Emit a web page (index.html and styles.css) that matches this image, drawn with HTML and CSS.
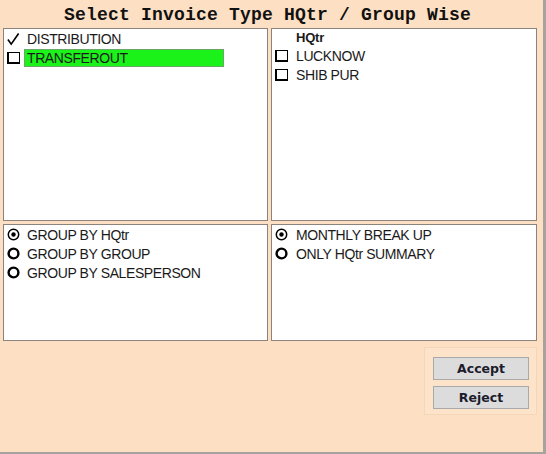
FILE: index.html
```html
<!DOCTYPE html>
<html>
<head>
<meta charset="utf-8">
<link rel="stylesheet" href="styles.css">
</head>
<body>
<div class="window">
  <h1 class="title">Select Invoice Type HQtr / Group Wise</h1>
  <div class="grid">
    <div class="panel">
      <div class="row">
        <svg class="icon" width="14" height="14" viewBox="0 0 14 14"><path d="M1 7.5 L4.5 12.5 L12.5 1" fill="none" stroke="#000" stroke-width="1.8" stroke-linejoin="miter"/></svg>
        <span class="label">DISTRIBUTION</span>
      </div>
      <div class="row">
        <span class="check"></span>
        <span class="label hilite">TRANSFEROUT</span>
      </div>
    </div>
    <div class="panel right">
      <div class="row head"><span class="label bold">HQtr</span></div>
      <div class="row"><span class="check"></span><span class="label">LUCKNOW</span></div>
      <div class="row"><span class="check"></span><span class="label">SHIB PUR</span></div>
    </div>
    <div class="panel">
      <div class="row">
        <svg class="icon radio" width="13" height="13" viewBox="0 0 13 13"><circle cx="6.5" cy="6.5" r="5.2" fill="#fff" stroke="#000" stroke-width="1.5"/><circle cx="6.5" cy="6.5" r="2.2" fill="#000"/></svg>
        <span class="label">GROUP BY HQtr</span>
      </div>
      <div class="row">
        <svg class="icon radio" width="13" height="13" viewBox="0 0 13 13"><circle cx="6.5" cy="6.5" r="4.9" fill="#fff" stroke="#000" stroke-width="2.4"/></svg>
        <span class="label">GROUP BY GROUP</span>
      </div>
      <div class="row">
        <svg class="icon radio" width="13" height="13" viewBox="0 0 13 13"><circle cx="6.5" cy="6.5" r="4.9" fill="#fff" stroke="#000" stroke-width="2.4"/></svg>
        <span class="label">GROUP BY SALESPERSON</span>
      </div>
    </div>
    <div class="panel right">
      <div class="row">
        <svg class="icon radio" width="13" height="13" viewBox="0 0 13 13"><circle cx="6.5" cy="6.5" r="5.2" fill="#fff" stroke="#000" stroke-width="1.5"/><circle cx="6.5" cy="6.5" r="2.2" fill="#000"/></svg>
        <span class="label">MONTHLY BREAK UP</span>
      </div>
      <div class="row">
        <svg class="icon radio" width="13" height="13" viewBox="0 0 13 13"><circle cx="6.5" cy="6.5" r="4.9" fill="#fff" stroke="#000" stroke-width="2.4"/></svg>
        <span class="label">ONLY HQtr SUMMARY</span>
      </div>
    </div>
  </div>
  <div class="actions">
    <div class="btnbox">
      <button class="btn">Accept</button>
      <button class="btn">Reject</button>
    </div>
  </div>
</div>
</body>
</html>
```
FILE: styles.css
```css
html, body {
  margin: 0;
  padding: 0;
}
body {
  width: 546px;
  height: 454px;
  overflow: hidden;
  background: #fde0c3;
}
.window {
  box-sizing: border-box;
  width: 546px;
  height: 454px;
  background: #fde0c3;
  border-right: 3px solid #a6a29e;
  border-bottom: 2px solid #a6a29e;
}
.title {
  margin: 0;
  height: 28px;
  box-sizing: border-box;
  padding: 2px 8px 0 0;
  line-height: 26px;
  text-align: center;
  font-family: "Liberation Mono", "Courier New", monospace;
  font-weight: bold;
  font-size: 18px;
  letter-spacing: 0.2px;
  color: #111;
}
.grid {
  margin-left: 3px;
  display: grid;
  grid-template-columns: 265px 266px;
  grid-template-rows: 193px 117px;
  gap: 3px;
}
.panel {
  box-sizing: border-box;
  background: #fff;
  border: 1px solid #8a847d;
  display: flex;
  flex-direction: column;
}
.row {
  height: 19px;
  display: flex;
  align-items: center;
  padding-left: 3px;
  font-family: "Liberation Sans", Arial, sans-serif;
  font-size: 14px;
  letter-spacing: -0.4px;
  color: #1a1a1a;
}
.row.head {
  height: 17px;
}
.icon {
  flex: none;
  width: 13px;
}
.label {
  margin-left: 7px;
  white-space: nowrap;
}
.right .label {
  margin-left: 8px;
}
.bold {
  font-weight: bold;
  font-size: 13px;
  letter-spacing: -0.2px;
  margin-left: 21px !important;
}
.check {
  flex: none;
  box-sizing: border-box;
  width: 13px;
  height: 12px;
  margin-top: 1px;
  border: 1px solid #000;
  border-left-width: 2px;
  border-bottom-width: 2px;
  background: #fff;
}
.hilite {
  margin-left: 4px;
  box-sizing: border-box;
  width: 200px;
  height: 18px;
  line-height: 16px;
  padding-left: 2px;
  background: #1af21a;
  border: 1px solid #6aa86a;
}
.actions {
  display: flex;
  justify-content: flex-end;
  margin-top: 6px;
  margin-right: 6px;
}
.btnbox {
  box-sizing: border-box;
  width: 113px;
  height: 68px;
  padding: 9px 0 0 8px;
  background: #fde3c9;
  border: 1px solid #f4d6b9;
  display: flex;
  flex-direction: column;
  gap: 6px;
}
.btn {
  box-sizing: border-box;
  width: 96px;
  height: 23px;
  margin: 0;
  padding: 0;
  background: #dcdcdc;
  border: 1px solid #a9a9a9;
  font-family: "DejaVu Sans", Verdana, sans-serif;
  font-weight: bold;
  font-size: 12.5px;
  color: #1c1c2c;
}
```
